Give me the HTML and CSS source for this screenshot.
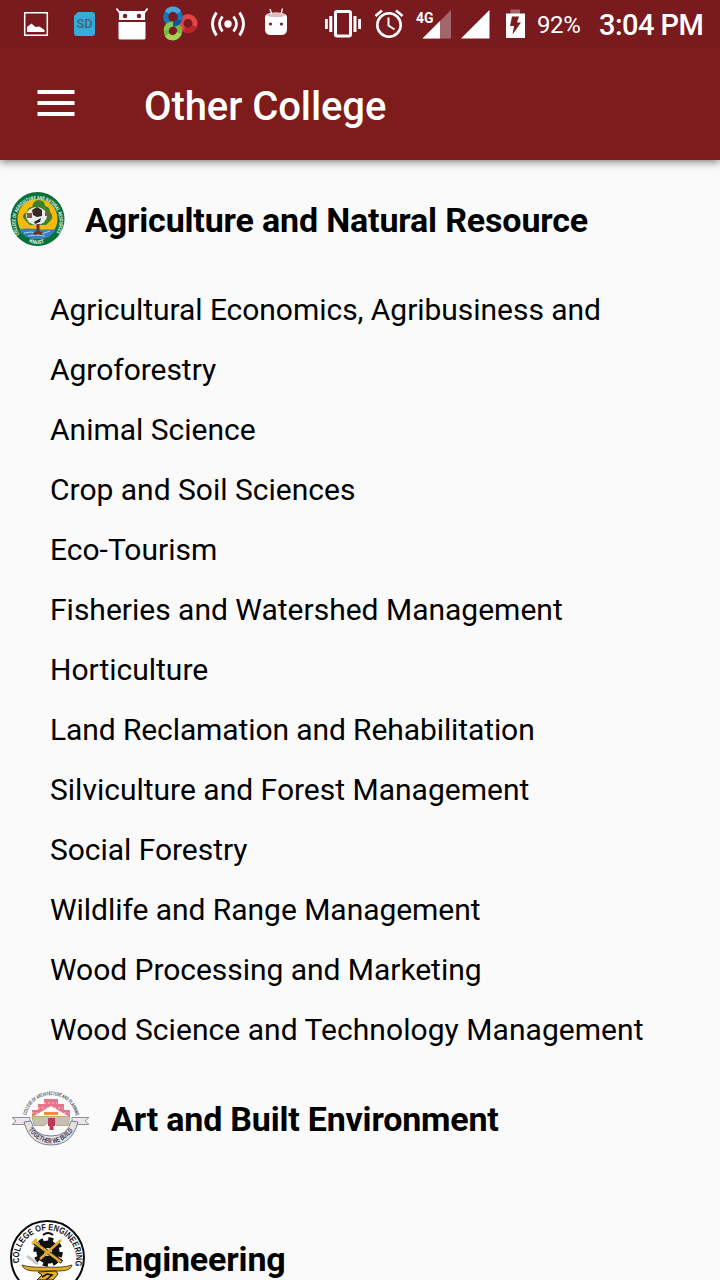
FILE: index.html
```html
<!DOCTYPE html>
<html lang="en">
<head>
<meta charset="utf-8">
<title>Other College</title>
<link rel="stylesheet" href="styles.css">
</head>
<body>
<div class="screen">
<header class="header">
  <div class="status">
    <svg width="48" height="48" viewBox="12 0 48 48"><path d="M24.700 12.700h22.600v22.600H24.700z" fill="none" stroke="#fff" stroke-width="1.500"/><path d="M27 32v-5l4.500-3.500 4 3.500 4-.5 5 3.500v2z" fill="#fff"/></svg>
    <svg width="48" height="48" viewBox="60 0 48 48"><path d="M78 12h14q3 0 3 3v18q0 3-3 3H77q-3 0-3-3V16z" fill="#33acdc"/><text x="76.500" y="28" class="sd" textLength="16" lengthAdjust="spacingAndGlyphs">SD</text></svg>
    <svg width="48" height="48" viewBox="108 0 48 48"><path d="M119 11h26v9h-26zM118.500 22h27v16q0 1.500-1.500 1.500h-24q-1.500 0-1.500-1.500z" fill="#fff"/><path d="m116.500 8.500 3 4M147.500 8.500l-3 4" stroke="#fff" stroke-width="1.800"/><circle cx="125" cy="16" r="2.200" fill="#791a1f"/><circle cx="139" cy="16" r="2.200" fill="#791a1f"/></svg>
    <svg width="48" height="48" viewBox="156 0 48 48" fill="none" stroke-width="5">
      <circle cx="188" cy="23.500" r="7" stroke="#e34345"/>
      <path d="M184 29a7 7 0 0 0 10.500-3" stroke="#bd252b"/>
      <circle cx="173" cy="31" r="6.800" stroke="#77b843"/><path d="M167 35a6.800 6.800 0 0 0 12-2" stroke="#a3d34f"/>
      <circle cx="173" cy="17" r="7.300" stroke="#1677b8"/><path d="M167 12.500a7 7 0 0 1 12 0" stroke="#48a6da"/><path d="M179.500 20a7 7 0 0 1-6 4" stroke="#0a5699"/>
      <path d="M166 30q1-6 7-6" stroke="#8cc64b"/>
    </svg>
    <svg width="48" height="48" viewBox="204 0 48 48" fill="none" stroke="#fff" stroke-width="2.800"><circle cx="228" cy="24" r="3.700" fill="#fff" stroke="none"/><path d="M222.500 16.500q-6 7.500 0 15M233.500 16.500q6 7.500 0 15M216.500 12.500q-8 11.500 0 23M239.500 12.500q8 11.500 0 23"/></svg>
    <svg width="48" height="48" viewBox="252 0 48 48"><path d="M265 17q0-4.500 11-4.500T287 17v12q0 6-6 6h-10q-6 0-6-6z" fill="#fff"/><ellipse cx="276" cy="15" rx="9.500" ry="2.200" fill="#d9bfc1"/><path d="m270 9 1.800 5M282.500 8.500l-1.300 5" stroke="#fff" stroke-width="1.300"/><circle cx="270.500" cy="24" r="1.600" fill="#791a1f"/><circle cx="281.500" cy="24" r="1.600" fill="#791a1f"/></svg>
    <svg class="system" width="48" height="48" viewBox="320 0 48 48"><rect x="335.500" y="11.500" width="15" height="24.500" rx="1.500" fill="none" stroke="#fff" stroke-width="3"/><path d="M325 19h2.800v10H325zM329.300 16h3v16h-3zM353.500 16h3v16h-3zM358.200 19h2.800v10h-2.800z" fill="#fff"/></svg>
    <svg width="42" height="48" viewBox="368 0 42 48" fill="none" stroke="#fff"><circle cx="389" cy="25" r="11.700" stroke-width="2.600"/><path d="M388.500 17.500v8l6 4" stroke-width="2"/><path d="m375.500 16 6.500-5.500M402.500 16 396 10.500" stroke-width="2.700"/></svg>
    <svg width="46" height="48" viewBox="410 0 46 48"><path d="M451 10v28.500h-28.500z" fill="#a3676b"/><path d="M440 21v17.500h-17.500z" fill="#fff"/><path d="M410 8h25v15h-25z" fill="#791a1f"/><text x="416" y="22.500" class="network" textLength="17.500" lengthAdjust="spacingAndGlyphs">4G</text></svg>
    <svg width="40" height="48" viewBox="456 0 40 48"><path d="M489.500 10v28.500H461z" fill="#fff"/></svg>
    <svg width="41" height="48" viewBox="496 0 41 48"><path d="M510.500 9.500h9.500V14h-9.500z" fill="#a3676b"/><path d="M506 13.500h19v24.500h-19z" fill="#fff"/><path d="M512 16.500h7l-2 6h4l-8.500 12 1.500-8.500h-4z" fill="#791a1f"/></svg>
    <span class="battery">92%</span>
    <span class="time">3:04 PM</span>
  </div>
  <div class="toolbar">
    <svg class="menu" width="38" height="26" viewBox="0 0 38 26"><path d="M.5 0h37v4H.5zM.5 11h37v4H.5zM.5 22h37v4H.5z" fill="#fff"/></svg>
    <h1 class="title">Other College</h1>
  </div>
</header>
<main>
  <section>
    <div class="college">
      <svg width="55" height="55" viewBox="10 192 55 55">
        <defs><path id="agri-arc" d="M19.500 234A22 22 0 1 1 55.500 234"/><path id="agri-base" d="M29 242Q37.500 246 46 242"/></defs>
        <circle cx="37.500" cy="219" r="27" fill="#08703a"/><circle cx="37.500" cy="219" r="20" fill="#f7b90b"/>
        <path d="M19 229q9-1 18 0t19 0q-4 10-18.500 10T19 229z" fill="#397ebd"/><path d="M24 233q7-2 12 0t14-2M28 236q9-2 17 0" stroke="#a7d3e8" fill="none"/>
        <path d="M24 219q-3-4 3-7 1-5 5-5 1-6 6-7 7 0 7 6 5 1 5 6 4 4 1 8l-5 5H30z" fill="#3a812c"/>
        <ellipse cx="36.500" cy="216" rx="10.500" ry="9" fill="#e8ecea"/><path d="M38 224v9M34 234q4-3 8 0" stroke="#6d3021" stroke-width="3" fill="none"/><path d="m32 210 5-3 5 3v6l-5 1-4-2z" fill="#382824"/><path d="M27 213h5v5h-5zM45 212h4v4h-4z" fill="#8e553d"/><path d="m34 222 7-4-1 4-5 2z" fill="#282824"/>
        <text class="agri-text"><textPath href="#agri-arc" textLength="94" lengthAdjust="spacingAndGlyphs">COLLEGE OF AGRICULTURE AND NATURAL RESOURCES</textPath></text><text class="agri-text"><textPath href="#agri-base" textLength="16" lengthAdjust="spacingAndGlyphs">KNUST</textPath></text>
      </svg>
      <h2 class="name agriculture">Agriculture and Natural Resource</h2>
    </div>
    <ul class="programs">
      <li class="snug">Agricultural Economics, Agribusiness and</li>
      <li class="snug">Agroforestry</li>
      <li>Animal Science</li>
      <li>Crop and Soil Sciences</li>
      <li>Eco-Tourism</li>
      <li>Fisheries and Watershed Management</li>
      <li>Horticulture</li>
      <li class="tight">Land Reclamation and Rehabilitation</li>
      <li>Silviculture and Forest Management</li>
      <li class="snug">Social Forestry</li>
      <li class="snug">Wildlife and Range Management</li>
      <li class="snug">Wood Processing and Marketing</li>
      <li class="loose">Wood Science and Technology Management</li>
    </ul>
  </section>
  <section class="college art-row">
    <svg width="80" height="56" viewBox="10 1090 80 56">
      <defs><path id="art-arc" d="M26.500 1115A24.800 23.500 0 0 1 75.500 1115"/><path id="art-base" d="M28 1130Q51 1157 74 1130"/></defs>
      <path d="M12 1117.500h18v7H12l4-3.500zM89 1117.500H72v7h17l-4-3.500z" fill="#eee6e7" stroke="#8d90a0"/>
      <path d="M24 1122Q30 1145 51 1145t27-23l-7-1Q68 1136 51 1136t-20-15z" fill="#e9dfdf" stroke="#777f96"/>
      <path d="M32 1116v-6h6v-6h6v-5h14v5h6v6h6v6z" fill="#e5758b"/><path d="M32 1113h37M38 1108h25M44 1103h13" stroke="#fac9cf" stroke-dasharray="2 2"/>
      <path d="m34 1116 17-10 17 10z" fill="#fff"/><path d="M44 1112h14v3H44z" fill="#f08b42"/>
      <path d="M32 1116.500h38l-2 9H57l-4-3h-5l-4 3H34z" fill="#c8beb8" stroke="#a5a45c" stroke-width=".8"/><path d="M48 1118h7v8h-7zM49.500 1126h4v4h-4z" fill="#bc3b56"/>
      <text class="art-text"><textPath href="#art-arc" textLength="69" lengthAdjust="spacingAndGlyphs">COLLEGE OF ARCHITECTURE AND PLANNING</textPath></text><text class="art-bottom"><textPath href="#art-base" textLength="54" lengthAdjust="spacingAndGlyphs">TOGETHER WE BUILD</textPath></text>
    </svg>
    <h2 class="name art">Art and Built Environment</h2>
  </section>
  <section class="college engineering-row">
    <svg width="75" height="75" viewBox="10 1220 75 75">
      <defs><path id="eng-arc" d="M19.500 1264A28.500 28.500 0 1 1 75.500 1264"/></defs>
      <circle cx="47.500" cy="1257.500" r="36.500" fill="#fff" stroke="#0b0b0b" stroke-width="2"/>
      <text class="eng-text"><textPath href="#eng-arc" startOffset="1" textLength="101" lengthAdjust="spacingAndGlyphs">COLLEGE OF ENGINEERING</textPath></text>
      <path d="m27 1256 11 8" stroke="#c8c8c8" stroke-width="3"/>
      <path d="M43 1235q5-4 10 0" stroke="#111" fill="none" stroke-width="2"/><circle cx="48" cy="1252" r="11.500" fill="#111"/><circle cx="48" cy="1252" r="12.500" fill="none" stroke="#111" stroke-width="4.500" stroke-dasharray="4.900 4.900"/><circle cx="48" cy="1252" r="4" fill="#ddd"/>
      <path d="m33 1242 29 20" stroke="#222" stroke-width="4"/><path d="m34 1242 27 20M40 1259l21-19" stroke="#e4aa26" stroke-width="2.500"/><path d="m32 1244 5-5" stroke="#edb52c" stroke-width="3"/>
      <path d="M22 1265q2 6 13 6h24q12 0 13-6-9 3-24 2-17 1-26-2z" fill="#e6ad25" stroke="#302511" stroke-width=".8"/><path d="m38 1272 18-1 2 3-5 6H37l5-5z" fill="#e6ad25" stroke="#252015"/><path d="m42 1277 5-3 5 1-6 5" stroke="#111" fill="none" stroke-width="1.500"/>
    </svg>
    <h2 class="name engineering">Engineering</h2>
  </section>
</main>
</div>
</body>
</html>
```
FILE: styles.css
```css
* { box-sizing: border-box; }
body { margin: 0; font-family: Roboto, sans-serif; background: #fafafa; color: #000; }
.screen { width: 720px; height: 1280px; overflow: hidden; }
.header { background: #7e1b1b; color: #fff; box-shadow: 0 2px 8px rgba(0,0,0,.5); }
.status { display: flex; height: 48px; padding-left: 12px; background: #791a1f; white-space: nowrap; }
.status svg { flex: none; }
.system { margin-left: 20px; }
.battery { width: 62px; font-size: 24px; line-height: 50px; letter-spacing: -.4px; }
.time { font-size: 29px; font-weight: 500; line-height: 51px; letter-spacing: -.55px; }
.sd { font: 500 12px Roboto, sans-serif; fill: #47606f; }
.network { font: 700 15px Roboto, sans-serif; fill: #fff; }
.toolbar { display: flex; height: 112px; padding-left: 37px; align-items: center; gap: 69px; }
.menu { margin-bottom: 2px; }
.title { margin: 5px 0 0; font-size: 40px; font-weight: 500; line-height: 48px; letter-spacing: -.08px; }
.college { display: flex; height: 120px; padding-left: 10px; align-items: center; gap: 20px; }
.college svg { flex: none; margin-bottom: 2px; overflow: visible; }
.name { margin: 0; font-size: 34px; font-weight: 700; line-height: 40px; white-space: nowrap; letter-spacing: -.16px; }
.programs { margin: 0; padding: 0 0 0 50px; list-style: none; font-size: 30px; line-height: 60px; white-space: nowrap; }
.snug { letter-spacing: -.04px; }
.tight { letter-spacing: -.1px; }
.loose { letter-spacing: .05px; }
.art-row { gap: 21px; }
.art-row svg { margin-bottom: 5px; }
.art, .engineering { margin-bottom: 2px; }
.art { letter-spacing: -.2px; }
.engineering-row { height: 160px; }
.engineering-row svg { margin-bottom: 5px; }
.agri-text { font: 700 5px Roboto, sans-serif; fill: #e9f5e9; }
.art-text { font: 700 5px Roboto, sans-serif; fill: #55596c; }
.art-bottom { font: 700 7px Roboto, sans-serif; fill: #42475c; }
.eng-text { font: 700 9px "Liberation Sans", sans-serif; fill: #111; }
```
